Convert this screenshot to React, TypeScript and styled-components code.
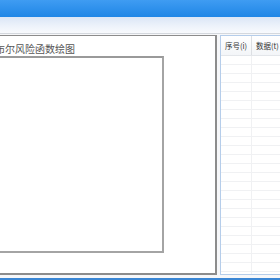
import React from "react";
import styled, { createGlobalStyle } from "styled-components";

const Global = createGlobalStyle`
  html, body { margin: 0; padding: 0; width: 280px; height: 280px; overflow: hidden; background: #f4f6f9; }
  #root { width: 280px; height: 280px; }
`;

const Window = styled.div`
  width: 280px;
  height: 280px;
  display: flex;
  flex-direction: column;
  overflow: hidden;
  background: #f6f7f9;
  font-family: "Noto Sans CJK SC", "Liberation Sans", sans-serif;
`;

const TitleBar = styled.div`
  height: 17px;
  flex: none;
  background: linear-gradient(#3f9cf2, #1f86e6);
`;

const ToolBand = styled.div`
  height: 16px;
  flex: none;
  background: linear-gradient(#dbe6f6, #eef3fb 60%, #f8fafd);
  border-bottom: 1px solid #d4d8de;
`;

const Content = styled.div`
  flex: 1;
  display: flex;
  gap: 3px;
  padding: 1px 0 3px 0;
  min-height: 0;
`;

const GroupPanel = styled.div`
  width: 232px;
  margin-left: -15px;
  flex: none;
  background: #ffffff;
  border: 1px solid #8c8c8c;
  border-right-width: 2px;
  border-bottom-width: 2px;
  box-sizing: border-box;
  display: flex;
  flex-direction: column;
  padding: 6px 0 20px 0;
`;

const GroupTitle = styled.div`
  font-size: 10px;
  line-height: 14px;
  color: #555;
  margin-left: -1px;
  white-space: nowrap;
`;

const PlotArea = styled.div`
  margin-top: 0;
  margin-left: -10px;
  width: 188px;
  flex: 1;
  border: 2px solid #a4a4a4;
  border-top-color: #9a9a9a;
  background: #fff;
  box-sizing: border-box;
`;

const Table = styled.div`
  flex: 1;
  background: #fff;
  border: 1px solid #b5cdea;
  border-right: none;
  box-sizing: border-box;
  display: flex;
  flex-direction: column;
  overflow: hidden;
`;

const HeaderRow = styled.div`
  height: 19px;
  flex: none;
  display: grid;
  grid-template-columns: 31px 60px;
  background: linear-gradient(#ffffff, #f3f5f8);
  border-bottom: 1px solid #e3e6ea;
`;

const HeaderCell = styled.div`
  font-size: 7.5px;
  line-height: 19px;
  color: #333;
  padding-left: 4px;
  white-space: nowrap;
  overflow: hidden;
  border-right: 1px solid #dcdfe3;
`;

const Row = styled.div`
  height: 9px;
  flex: none;
  display: grid;
  grid-template-columns: 31px 60px;
  border-bottom: 1px solid #f0f1f3;
  box-sizing: border-box;
`;

const Cell = styled.div`
  border-right: 1px solid #f0f1f3;
`;

const BottomStrip = styled.div`
  height: 2px;
  flex: none;
  background: #3a86d4;
`;

export default function App() {
  const rows = Array.from({ length: 25 });
  return (
    <>
      <Global />
      <Window>
        <TitleBar />
        <ToolBand />
        <Content>
          <GroupPanel>
            <GroupTitle>威布尔风险函数绘图</GroupTitle>
            <PlotArea />
          </GroupPanel>
          <Table>
            <HeaderRow>
              <HeaderCell>序号(i)</HeaderCell>
              <HeaderCell>数据(t)</HeaderCell>
            </HeaderRow>
            {rows.map((_, i) => (
              <Row key={i}>
                <Cell />
                <Cell />
              </Row>
            ))}
          </Table>
        </Content>
        <BottomStrip />
      </Window>
    </>
  );
}
